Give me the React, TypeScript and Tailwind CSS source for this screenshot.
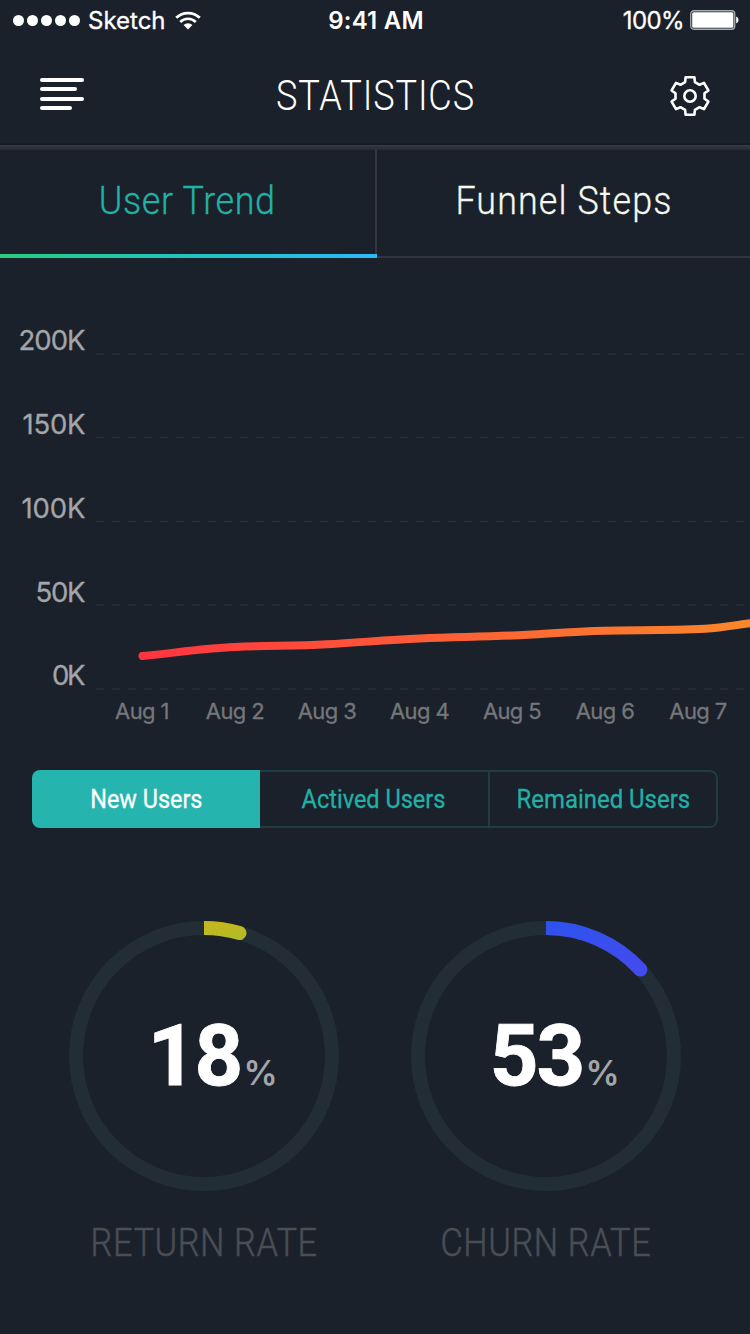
import React from "react";

const yTicks = [
  { label: "200K", base: 92, line: 96, width: 67 },
  { label: "150K", base: 176, line: 179.5, width: 63 },
  { label: "100K", base: 260, line: 263.5, width: 64 },
  { label: "50K", base: 344, line: 347, width: 50 },
  { label: "0K", base: 427, line: 431, width: 33.5 },
];

const days = [
  { label: "Aug 1", x: 142 },
  { label: "Aug 2", x: 235 },
  { label: "Aug 3", x: 327 },
  { label: "Aug 4", x: 419.5 },
  { label: "Aug 5", x: 512 },
  { label: "Aug 6", x: 605 },
  { label: "Aug 7", x: 698 },
];

function gearPath() {
  const tooth = [
    [-4.9, -13.9],
    [-4.4, -18.7],
    [4.4, -18.7],
    [4.9, -13.9],
  ];
  const pts: string[] = [];
  for (let k = 0; k < 6; k++) {
    const a = (k * Math.PI) / 3;
    for (const [x, y] of tooth) {
      const px = x * Math.cos(a) - y * Math.sin(a);
      const py = x * Math.sin(a) + y * Math.cos(a);
      pts.push(`${px.toFixed(2)} ${py.toFixed(2)}`);
    }
  }
  return `M${pts.join("L")}Z`;
}

function StatusBar() {
  return (
    <div className="flex h-10 items-center pt-px pl-[13px] pr-[11px] font-['Inter',sans-serif] text-[24px] text-white">
      <div className="flex flex-1 items-center">
        <div className="flex gap-[3px]">
          {[0, 1, 2, 3, 4].map((i) => (
            <span key={i} className="h-[11px] w-[11px] rounded-full bg-white" />
          ))}
        </div>
        <span className="ml-2 w-[78px] pt-px text-[24px] [-webkit-text-stroke:0.3px]">Sketch</span>
        <svg className="ml-[9px]" width="26" height="19" viewBox="0 0 26 19" fill="none" stroke="white">
          <path d="M1.2 6.8A17 17 0 0 1 24.8 6.8" strokeWidth="2.8" />
          <path d="M5.2 11A11 11 0 0 1 20.8 11" strokeWidth="2.6" />
          <path d="M13 18.5L8.6 14.1A6.2 6.2 0 0 1 17.4 14.1Z" fill="white" stroke="none" />
        </svg>
      </div>
      <span className="pt-px font-semibold tracking-[0.2px]">9:41 AM</span>
      <div className="flex flex-1 items-center justify-end">
        <span className="mr-[5px] pt-px tracking-[-0.6px] [-webkit-text-stroke:0.3px]">100%</span>
        <svg className="-mt-px" width="50" height="20" viewBox="0 0 50 20">
          <rect x="1.75" y="0.75" width="44" height="18.5" rx="3" fill="none" stroke="#a9acb0" strokeWidth="1.3" />
          <rect x="3.2" y="2.2" width="41.2" height="15.6" rx="1.5" fill="white" />
          <path d="M47.2 6.5Q49.500 7 49.500 10T47.2 13.5Z" fill="white" />
        </svg>
      </div>
    </div>
  );
}

function Header() {
  return (
    <header className="flex h-[105px] items-center justify-between border-b-2 border-[#171b23] pt-[9px] pl-10 pr-[39px] text-white">
      <div className="-mt-1 flex w-[45px] flex-col gap-[5.2px]">
        <span className="h-1 w-[44px] rounded-full bg-white" />
        <span className="h-1 w-[37px] rounded-full bg-white" />
        <span className="h-1 w-[44px] rounded-full bg-white" />
        <span className="h-1 w-[32px] rounded-full bg-white" />
      </div>
      <h1 className="-mt-px -ml-[3px] scale-x-[0.84] font-['Roboto',sans-serif] text-[43px] font-light leading-none tracking-[1px]">
        STATISTICS
      </h1>
      <svg width="42" height="42" viewBox="-21 -21 42 42" fill="none" stroke="white" strokeWidth="2.6" strokeLinejoin="round">
        <path d={gearPath()} />
        <circle r="5.7" />
      </svg>
    </header>
  );
}

function Tabs() {
  return (
    <div>
      <div className="h-[5px] bg-linear-to-b from-[#373b45] to-[#242a33]" />
      <nav className="flex h-[108px] font-['Roboto',sans-serif] text-[39px] font-light leading-none [-webkit-text-stroke:0.3px]">
        <div className="flex w-[377px] flex-col border-r-2 border-[#30353f]">
          <div className="flex flex-1 items-center justify-center pb-0.5 text-[#21b2a6]">
            <span className="scale-x-[0.92] tracking-[0.7px]">User Trend</span>
          </div>
          <div className="-mr-0.5 h-1 bg-linear-to-r from-[#28cc7d] to-[#2db9fa]" />
        </div>
        <div className="flex flex-1 items-center justify-center border-b-2 border-[#30353f] pb-1 text-[#f4f8ee]">
          <span className="scale-x-[0.92] tracking-[1.2px]">Funnel Steps</span>
        </div>
      </nav>
    </div>
  );
}

function TrendChart() {
  return (
    <svg className="block font-['Inter',sans-serif]" width="750" height="512" viewBox="0 0 750 512">
      <defs>
        <linearGradient id="trend" gradientUnits="userSpaceOnUse" x1="140" y1="400" x2="750" y2="365">
          <stop offset="0" stopColor="#ff3440" />
          <stop offset="0.5" stopColor="#fd5f36" />
          <stop offset="1" stopColor="#fa872b" />
        </linearGradient>
      </defs>
      {yTicks.map((t) => (
        <g key={t.label}>
          <text x={85.5 - t.width} y={t.base} textLength={t.width} fontSize="27.5" fill="#a2a5a9" stroke="#a2a5a9" strokeWidth="0.3">
            {t.label}
          </text>
          <path d={`M96 ${t.line}H744`} stroke="#2b3039" strokeWidth="1.6" strokeDasharray="8 8" />
        </g>
      ))}
      <path
        d="M142.500 398C175 395 200 390.500 235 389C270 387.500 295 388 327 386.200C360 384.500 385 382 420 380.500C455 379 480 379 512 377.500C545 376 570 373.500 605 372.700C640 372 670 372.500 705 370.800C725 369.500 738 366.500 756 364.500"
        fill="none"
        stroke="url(#trend)"
        strokeWidth="8"
        strokeLinecap="round"
      />
      {days.map((d) => (
        <text key={d.label} x={d.x} y="461" textAnchor="middle" fontSize="22" letterSpacing="-0.6" fill="#74777b" stroke="#74777b" strokeWidth="0.3">
          {d.label}
        </text>
      ))}
    </svg>
  );
}

function Segments() {
  return (
    <div className="mx-8 flex h-[58px] w-[686px] overflow-hidden rounded-lg font-['Roboto',sans-serif] text-[26px] leading-none [-webkit-text-stroke:0.3px]">
      <div className="flex w-[228px] items-center justify-center bg-[#25b5ae] text-white">
        <span className="scale-x-[0.9]">New Users</span>
      </div>
      <div className="flex w-[230px] items-center justify-center border-y-2 border-r-2 border-[#1f3d42] text-[#22b0a6]">
        <span className="scale-x-[0.905]">Actived Users</span>
      </div>
      <div className="flex w-[228px] items-center justify-center rounded-r-lg border-y-2 border-r-2 border-[#1f3d42] text-[#22b0a6]">
        <span className="scale-x-[0.92]">Remained Users</span>
      </div>
    </div>
  );
}

type GaugeProps = {
  id: string;
  value: string;
  label: string;
  angle: number;
  from: string;
  to: string;
};

function Gauge({ id, value, label, angle, from, to }: GaugeProps) {
  const a = (angle * Math.PI) / 180;
  const x = 135 + 128 * Math.sin(a);
  const y = 135 - 128 * Math.cos(a);
  return (
    <div className="flex w-[270px] flex-col items-center">
      <svg width="270" height="270" viewBox="0 0 270 270">
        <defs>
          <linearGradient id={id} gradientUnits="userSpaceOnUse" x1="135" y1="0" x2="140" y2="50">
            <stop offset="0" stopColor={from} />
            <stop offset="1" stopColor={to} />
          </linearGradient>
          <clipPath id={`${id}-clip`}>
            <rect x="135" y="0" width="135" height="270" />
          </clipPath>
        </defs>
        <circle cx="135" cy="135" r="128" fill="none" stroke="#232d36" strokeWidth="14" />
        <path
          d={`M135 7A128 128 0 0 1 ${x} ${y}`}
          fill="none"
          stroke={`url(#${id})`}
          strokeWidth="14"
          strokeLinecap="round"
          clipPath={`url(#${id}-clip)`}
        />
        <text x="125.500" y="164" textAnchor="middle" fontSize="85" letterSpacing="-2" className="fill-white stroke-white stroke-[0.8px] font-['Roboto',sans-serif] font-bold">
          {value}
        </text>
        <text x="191.5" y="164" textAnchor="middle" fontSize="34" className="fill-[#a2a5a9] font-['Inter',sans-serif] font-semibold">
          %
        </text>
      </svg>
      <div className="mt-[33px] whitespace-nowrap font-['Roboto',sans-serif] text-[39px] font-light leading-none text-[#4a4e55] [-webkit-text-stroke:0.5px]">
        <div className="scale-x-[0.88] tracking-[0.7px]">{label}</div>
      </div>
    </div>
  );
}

export default function App() {
  return (
    <main className="h-[1334px] w-[750px] overflow-hidden bg-[#1b212a]">
      <StatusBar />
      <Header />
      <Tabs />
      <TrendChart />
      <Segments />
      <div className="mt-[93px] flex gap-[72px] pl-[69px]">
        <Gauge id="return-rate" value="18" label="RETURN RATE" angle={16.1} from="#c9b51c" to="#8ec53c" />
        <Gauge id="churn-rate" value="53" label="CHURN RATE" angle={47.5} from="#2c53ec" to="#424bee" />
      </div>
    </main>
  );
}
